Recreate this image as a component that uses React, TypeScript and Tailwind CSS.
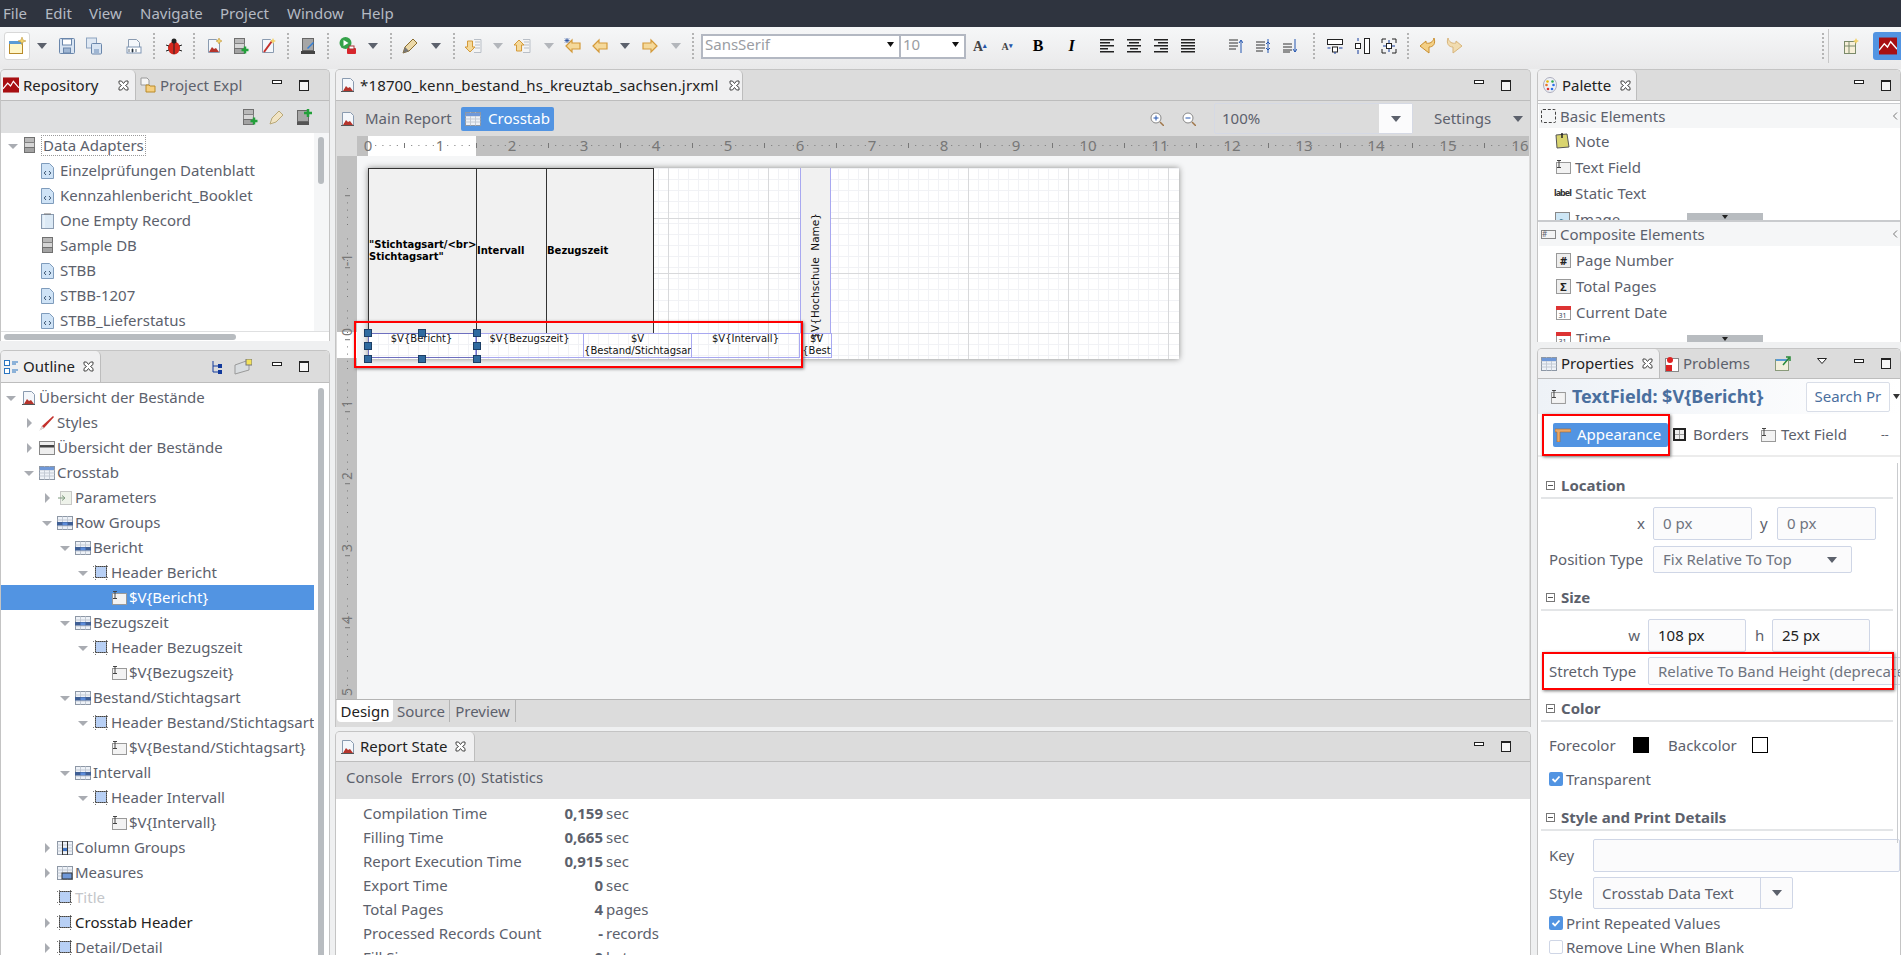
import React from 'react'

const Page = ({ children }: { children?: React.ReactNode }) => (
  <svg width="16" height="16" viewBox="0 0 16 16">
    <path d="M2.500 1.500h8l3 3v10h-11z" fill="#f4f7fb" stroke="#8a9bb0" />
    {children}
  </svg>
)

const ReportIcon = () => (
  <Page>
    <path d="M3 14l3-5 2 2 2-1 3 4z" fill="#b5342c" />
    <path d="M1 14.500h13" stroke="#555" />
  </Page>
)

const XmlIcon = () => (
  <svg width="13" height="16" viewBox="0 0 13 16">
    <path d="M.5 .5h8l4 4v11H.5z" fill="#cfe3f6" stroke="#7f9cbc" />
    <path d="M5 8l-1.800 2L5 12M8 8l1.800 2L8 12" stroke="#3b5470" fill="none" />
  </svg>
)

const EmptyRecord = () => (
  <svg width="13" height="16" viewBox="0 0 13 16">
    <rect x=".5" y="1.500" width="12" height="14" fill="#dbe9f5" stroke="#8a9bb0" />
    <path d="M3 .5h7v1H3z" fill="#777" />
    <path d="M3 2v13" stroke="#f4f9fd" />
  </svg>
)

const DbIcon = ({ plus }: { plus?: boolean }) => (
  <svg width="16" height="17" viewBox="0 0 16 17">
    <rect x="1.500" y=".5" width="10" height="5" fill="#b9b9b9" stroke="#707070" />
    <rect x="1.500" y="5.500" width="10" height="5" fill="#d6d6d6" stroke="#808080" />
    <rect x="1.500" y="10.500" width="10" height="5" fill="#a3a3a3" stroke="#707070" />
    {plus && <path d="M12 8.500v7M8.500 12h7" stroke="#22a03a" strokeWidth="2.500" />}
  </svg>
)

const RepoLogo = ({ big }: { big?: boolean }) => (
  <svg width={big ? 18 : 16} height={big ? 18 : 16} viewBox="0 0 17 16">
    <rect width="17" height="16" fill="#a80f12" />
    <path d="M0 12l5-6 3 3 3-5 6 7" fill="none" stroke="#fff" strokeWidth="1.300" />
  </svg>
)

const CloseX = () => (
  <svg width="11" height="11" viewBox="0 0 11 11">
    <path
      d="M1 1h2.500L5.500 3.500 7.500 1H10v2.500L7.500 5.500 10 7.500V10H7.500L5.500 7.500 3.500 10H1V7.500l2.500-2-2.500-2z"
      fill="#fff"
      stroke="#444"
    />
  </svg>
)

const MinMax = () => (
  <div className="flex items-center gap-[17px]">
    <span className="mb-[6px] h-[4px] w-[10px] border border-[#222] bg-white" />
    <span className="h-[11px] w-[10px] border border-t-[2px] border-[#222] bg-[#f6f6f6]" />
  </div>
)

const Caret = ({ light }: { light?: boolean }) => (
  <svg width="10" height="6" viewBox="0 0 10 6">
    <path d="M0 0h10L5 6z" fill={light ? '#b3b6bb' : '#5c616c'} />
  </svg>
)

const Tri = ({ open }: { open?: boolean }) => (
  <svg width="10" height="10" viewBox="0 0 10 10">
    {open ? <path d="M0 3h10L5 8z" fill="#a9acb2" /> : <path d="M3 0v10l5-5z" fill="#a9acb2" />}
  </svg>
)

const Sep = ({ className }: { className: string }) => (
  <div className={`flex h-[26px] shrink-0 justify-center ${className}`}>
    <span className="h-full border-l-2 border-dotted border-[#b4b4b4]" />
  </div>
)

const Slot = ({ className, children }: { className: string; children?: React.ReactNode }) => (
  <div className={`flex shrink-0 items-center justify-center ${className}`}>{children}</div>
)

const Arrow = ({ dir, star, doc }: { dir: 'l' | 'r' | 'u' | 'd'; star?: boolean; doc?: boolean }) => {
  const rot = { l: 0, r: 180, u: 90, d: 270 }[dir]
  return (
    <svg width="18" height="18" viewBox="0 0 18 18">
      {doc && <path d="M10 2.500h7v13h-7M11 5h5M11 8h5M11 11h5" fill="#f4f4f4" stroke="#b9bfc7" />}
      <g transform={`rotate(${rot} ${doc ? 6 : 9} 9)`}>
        {doc ? (
          <path d="M0 9l5-5v2.500h6v5H5V14z" fill="#f5d99a" stroke="#d49a3a" />
        ) : (
          <path d="M2 9l6-6v3h8v6H8v3z" fill="#f5d99a" stroke="#d49a3a" strokeWidth="1.200" />
        )}
      </g>
      {star && <path d="M3 1v5M.5 3.500h5M1 1.500l4 4M5 1.500l-4 4" stroke="#2a4f9c" strokeWidth=".8" />}
    </svg>
  )
}

const Undo = ({ flip }: { flip?: boolean }) => (
  <svg width="18" height="18" viewBox="0 0 18 18" className={flip ? '-scale-x-100 opacity-60' : ''}>
    <path
      d="M15 1c2 6-1 9-5 9v6L1 9l6-5v2c4 1 7-1 8-5z"
      fill="#f3cf85"
      stroke="#c98e2e"
      strokeLinejoin="round"
    />
  </svg>
)

const AlignIcon = ({ kind }: { kind: 'l' | 'c' | 'r' | 'j' }) => {
  const rows = [14, 10, 14, 8, 14]
  return (
    <svg width="14" height="14" viewBox="0 0 14 14">
      {rows.map((w, i) => {
        const len = kind === 'j' ? 14 : w
        const x = kind === 'l' || kind === 'j' ? 0 : kind === 'c' ? (14 - len) / 2 : 14 - len
        return <rect key={i} x={x} y={i * 3} width={len} height="1.500" fill="#222" />
      })}
    </svg>
  )
}

const TableIcon = ({ mark }: { mark: 'row' | 'col' | 'cell' | 'full' }) => (
  <svg width="16" height="14" viewBox="0 0 16 14">
    <rect x=".5" y=".5" width="15" height="13" fill="#eef2f8" stroke="#8d97a5" />
    <path d="M.5 4h15M.5 7h15M.5 10h15M5.500 .5v13M10.500 .5v13" stroke="#c3cad4" />
    {mark === 'row' && <rect x="0" y="6" width="16" height="3.500" fill="#3f5f95" />}
    {mark === 'row' && <rect x="5.500" y="6.500" width="5" height="2.500" fill="#5d8ddb" />}
    {mark === 'col' && <rect x="5.500" y="0" width="5" height="14" fill="none" stroke="#333" />}
    {mark === 'col' && <rect x="6" y="7" width="4" height="3" fill="#3f74c4" />}
    {mark === 'cell' && <rect x="5" y="7" width="10" height="6" fill="#6f98d8" stroke="#333" />}
    {mark === 'full' && <rect x="1" y="1" width="14" height="3" fill="#6f98d8" />}
  </svg>
)

const BandIcon = () => (
  <svg width="16" height="15" viewBox="0 0 16 15">
    <rect x="2.500" y="1.500" width="11" height="11" fill="#b8d0f5" stroke="#444" />
    <path d="M0 1.500h16M0 12.500h16M2.500 0v15M13.500 0v15" stroke="#777" strokeDasharray="1 1" />
  </svg>
)

const FieldIcon = () => (
  <svg width="16" height="16" viewBox="0 0 16 16">
    <rect x="1.500" y="3.500" width="14" height="11" fill="#f3f3f3" stroke="#999" />
    <path d="M2 1.500h4M4 1.500v7M2 8.500h4" stroke="#444" />
  </svg>
)

const tree1 = [
  { icon: <XmlIcon />, label: 'Einzelprüfungen Datenblatt' },
  { icon: <XmlIcon />, label: 'Kennzahlenbericht_Booklet' },
  { icon: <EmptyRecord />, label: 'One Empty Record' },
  { icon: <DbIcon />, label: 'Sample DB' },
  { icon: <XmlIcon />, label: 'STBB' },
  { icon: <XmlIcon />, label: 'STBB-1207' },
  { icon: <XmlIcon />, label: 'STBB_Lieferstatus' },
]

type Node = {
  indent: string
  tri?: 'open' | 'closed'
  icon: React.ReactNode
  label: string
  selected?: boolean
  tone?: string
}

const outline: Node[] = [
  { indent: 'pl-[3px]', tri: 'open', icon: <ReportIcon />, label: 'Übersicht der Bestände' },
  {
    indent: 'pl-[21px]',
    tri: 'closed',
    icon: (
      <svg width="16" height="16" viewBox="0 0 16 16">
        <path d="M1 15l2-4L14 1l1 1L5 13z" fill="#c4302b" />
        <path d="M0 16l3-5 2 2z" fill="#ddd" />
      </svg>
    ),
    label: 'Styles',
  },
  {
    indent: 'pl-[21px]',
    tri: 'closed',
    icon: (
      <svg width="16" height="14" viewBox="0 0 16 14">
        <rect x=".5" y=".5" width="15" height="13" fill="#eee" stroke="#888" />
        <rect x="1" y="4" width="14" height="2.500" fill="#444" />
      </svg>
    ),
    label: 'Übersicht der Bestände',
  },
  { indent: 'pl-[21px]', tri: 'open', icon: <TableIcon mark="full" />, label: 'Crosstab' },
  {
    indent: 'pl-[39px]',
    tri: 'closed',
    icon: (
      <svg width="16" height="16" viewBox="0 0 16 16">
        <rect x="3.500" y="1.500" width="11" height="13" fill="#eef2ea" stroke="#999" strokeDasharray="1 1" />
        <path d="M1 8h6M5 5.500L8 8l-3 2.500" fill="none" stroke="#7f9a7f" />
      </svg>
    ),
    label: 'Parameters',
  },
  { indent: 'pl-[39px]', tri: 'open', icon: <TableIcon mark="row" />, label: 'Row Groups' },
  { indent: 'pl-[57px]', tri: 'open', icon: <TableIcon mark="row" />, label: 'Bericht' },
  { indent: 'pl-[75px]', tri: 'open', icon: <BandIcon />, label: 'Header Bericht' },
  { indent: 'pl-[93px]', icon: <FieldIcon />, label: '$V{Bericht}', selected: true },
  { indent: 'pl-[57px]', tri: 'open', icon: <TableIcon mark="row" />, label: 'Bezugszeit' },
  { indent: 'pl-[75px]', tri: 'open', icon: <BandIcon />, label: 'Header Bezugszeit' },
  { indent: 'pl-[93px]', icon: <FieldIcon />, label: '$V{Bezugszeit}' },
  { indent: 'pl-[57px]', tri: 'open', icon: <TableIcon mark="row" />, label: 'Bestand/Stichtagsart' },
  { indent: 'pl-[75px]', tri: 'open', icon: <BandIcon />, label: 'Header Bestand/Stichtagsart' },
  { indent: 'pl-[93px]', icon: <FieldIcon />, label: '$V{Bestand/Stichtagsart}' },
  { indent: 'pl-[57px]', tri: 'open', icon: <TableIcon mark="row" />, label: 'Intervall' },
  { indent: 'pl-[75px]', tri: 'open', icon: <BandIcon />, label: 'Header Intervall' },
  { indent: 'pl-[93px]', icon: <FieldIcon />, label: '$V{Intervall}' },
  { indent: 'pl-[39px]', tri: 'closed', icon: <TableIcon mark="col" />, label: 'Column Groups' },
  { indent: 'pl-[39px]', tri: 'closed', icon: <TableIcon mark="cell" />, label: 'Measures' },
  { indent: 'pl-[39px]', icon: <BandIcon />, label: 'Title', tone: 'text-[#c4c6ca]' },
  { indent: 'pl-[39px]', tri: 'closed', icon: <BandIcon />, label: 'Crosstab Header', tone: 'text-[#222]' },
  { indent: 'pl-[39px]', tri: 'closed', icon: <BandIcon />, label: 'Detail/Detail' },
]

const stats = [
  ['Compilation Time', '0,159', 'sec'],
  ['Filling Time', '0,665', 'sec'],
  ['Report Execution Time', '0,915', 'sec'],
  ['Export Time', '0', 'sec'],
  ['Total Pages', '4', 'pages'],
  ['Processed Records Count', '-', 'records'],
  ['Fill Size', '0', 'bytes'],
]

const Calendar = () => (
  <svg width="15" height="16" viewBox="0 0 15 16">
    <rect x=".5" y="2.500" width="14" height="13" fill="#fff" stroke="#999" />
    <rect x="0" y="2" width="15" height="4" fill="#d33" />
    <text x="2.500" y="14" fontSize="7" fill="#345">31</text>
  </svg>
)

const BoxIcon = ({ ch }: { ch: string }) => (
  <span className="flex h-[15px] w-[15px] items-center justify-center border border-[#999] bg-[#eee] text-[11px] font-bold leading-none text-[#222]">
    {ch}
  </span>
)

const PaletteRow = ({ icon, label }: { icon: React.ReactNode; label: string }) => (
  <div className="flex h-[26px] shrink-0 items-center pl-[17px]">
    <span className="flex w-[20px] items-center">{icon}</span>
    <span>{label}</span>
  </div>
)

const PaletteHead = ({ icon, label }: { icon: React.ReactNode; label: string }) => (
  <div className="flex h-[24px] items-center bg-[#f5f6f7] pl-[2px]">
    <span className="flex w-[15px]">{icon}</span>
    <span className="ml-[4px]">{label}</span>
    <svg width="7" height="8" viewBox="0 0 7 8" className="ml-auto mr-0">
      <path d="M4 .5L.5 4 4 7.500" fill="none" stroke="#777" />
    </svg>
  </div>
)

const ScrollNub = () => (
  <div className="absolute bottom-0 left-[149px] flex h-[7px] w-[76px] items-center justify-center bg-[#b8bcc0]">
    <svg width="6" height="4" viewBox="0 0 6 4">
      <path d="M0 0h6L3 4z" fill="#222" />
    </svg>
  </div>
)

const SectionHead = ({ label, className }: { label: string; className: string }) => (
  <div className={`mr-[7px] flex h-[25px] items-center gap-[6px] border-b-2 border-[#e3e5e7] pl-[5px] ${className}`}>
    <span className="flex h-[9px] w-[9px] items-center justify-center border border-[#777]">
      <span className="h-px w-[5px] bg-[#555]" />
    </span>
    <span className="font-bold text-[#5c616c]">{label}</span>
  </div>
)

const Input = ({ className, value, dark }: { className: string; value?: string; dark?: boolean }) => (
  <div
    className={`flex shrink-0 items-center rounded-[2px] border border-[#cfd6e6] bg-[#fbfbfc] pl-[9px] ${
      dark ? 'text-[#222]' : 'text-[#6f747f]'
    } ${className}`}
  >
    {value}
  </div>
)

const Check = ({ on }: { on?: boolean }) =>
  on ? (
    <span className="flex h-[14px] w-[14px] items-center justify-center rounded-[2px] bg-[#5294e2]">
      <svg width="10" height="10" viewBox="0 0 10 10">
        <path d="M1.500 5l2.500 2.500L8.500 2.500" fill="none" stroke="#fff" strokeWidth="1.800" />
      </svg>
    </span>
  ) : (
    <span className="h-[14px] w-[14px] rounded-[2px] border border-[#cfd6e6] bg-white" />
  )

const RedBox = ({ className }: { className: string }) => (
  <div className={`pointer-events-none absolute border-[2px] border-[#f00] shadow-[1px_1px_3px_#777] ${className}`} />
)

const Handle = ({ className }: { className: string }) => (
  <span className={`absolute h-[8px] w-[8px] border border-[#1d3f66] bg-[#2f6a9f] ${className}`} />
)

const Ruler = () => (
  <svg width="1172" height="20" className="block">
    <rect width="1172" height="20" fill="#c0c0c0" />
    <rect x="11" width="108" height="20" fill="#fff" />
    {Array.from({ length: 160 }).map((_, i) =>
      i % 10 === 0 ? null : (
        <rect key={i} x={11 + i * 7.2} y={i % 5 === 0 ? 7 : 9} width="1" height={i % 5 === 0 ? 5 : 1} fill="#777" />
      ),
    )}
    {Array.from({ length: 17 }).map((_, i) => (
      <text key={i} x={11 + i * 72} y="15" textAnchor="middle" fontSize="15" fill="#777" fontFamily="Noto Sans">
        {i}
      </text>
    ))}
  </svg>
)

const VRuler = () => (
  <svg width="20" height="543" className="block">
    <rect width="20" height="543" fill="#c0c0c0" />
    <rect y="176" width="20" height="26" fill="#fff" />
    {Array.from({ length: 76 }).map((_, i) =>
      (i + 4) % 10 === 0 ? null : (
        <rect key={i} x={i % 5 === 1 ? 8 : 10} y={32 + i * 7.2} width={i % 5 === 1 ? 5 : 1} height="1" fill="#777" />
      ),
    )}
    {[-1, 0, 1, 2, 3, 4, 5].map(n => (
      <text
        key={n}
        transform={`translate(15 ${176 + n * 72}) rotate(-90)`}
        textAnchor="middle"
        fontSize="14"
        fill="#777"
        fontFamily="Noto Sans"
      >
        {n}
      </text>
    ))}
  </svg>
)

const GridLines = () => (
  <svg width="811" height="191" className="absolute left-0 top-0">
    <rect width="811" height="191" fill="#fff" />
    {Array.from({ length: 81 }).map((_, i) => (
      <path key={i} d={`M${i * 10 + 0.5} 0V191`} stroke="#f1f2f5" />
    ))}
    {Array.from({ length: 20 }).map((_, i) => (
      <path key={i} d={`M0 ${i * 11 + 0.5}H811`} stroke="#f1f2f5" />
    ))}
    {[300, 400, 500, 600, 700, 800].map(x => (
      <path key={x} d={`M${x + 0.5} 0V191`} stroke="#d8d9db" />
    ))}
    {[50, 105, 165].map(y => (
      <path key={y} d={`M0 ${y + 0.5}H811`} stroke="#d8d9db" />
    ))}
  </svg>
)

const HeadCell = ({ className, children }: { className: string; children: React.ReactNode }) => (
  <div className={`flex items-center border-l border-t border-[#333] bg-[#f1f1f1] pb-[1px] font-bold leading-[12px] text-black ${className}`}>
    <span>{children}</span>
  </div>
)

const DataCell = ({ children }: { children?: React.ReactNode }) => (
  <div className="h-[25px] w-[108px] shrink-0 overflow-hidden whitespace-nowrap border-y border-r border-[#a8a8f0] text-center leading-[12px] text-[#111]">
    <span className="relative -top-px block">{children}</span>
  </div>
)

function Canvas() {
  return (
    <div className="relative min-h-0 flex-1 bg-[#f5f6f7]">
      <div className="absolute left-[11px] top-[12px] h-[191px] w-[811px] font-['DejaVu_Sans',sans-serif] text-[10px] shadow-[0_0_6px_#8a8a8a]">
        <GridLines />
        <div className="relative flex h-[165px]">
          <HeadCell className="w-[108px]">
            "Stichtagsart/&lt;br&gt;
            <br />
            Stichtagsart"
          </HeadCell>
          <HeadCell className="w-[70px]">Intervall</HeadCell>
          <HeadCell className="w-[108px] border-r">Bezugszeit</HeadCell>
          <div className="w-[146px]" />
          <div className="flex w-[31px] items-start justify-center border-x border-[#a8a8f0] bg-[#f1f1f1] pt-[45px]">
            <span className="rotate-180 whitespace-pre text-[10.500px] text-[#111] [writing-mode:vertical-rl]">$V{'{'}Hochschule  Name{'}'}</span>
          </div>
        </div>
        <div className="relative flex h-[25px]">
          <div className="absolute inset-y-0 left-0 w-[109px] border border-[#6d6fbf]" />
          <DataCell>$V{'{'}Bericht{'}'}</DataCell>
          <DataCell>$V{'{'}Bezugszeit{'}'}</DataCell>
          <DataCell>
            $V
            <br />
            {'{'}Bestand/Stichtagsar
          </DataCell>
          <DataCell>$V{'{'}Intervall{'}'}</DataCell>
          <div className="ml-px h-[25px] w-[31px] overflow-hidden whitespace-nowrap border border-[#a8a8f0] text-center leading-[12px] text-[#111]">
            <span className="relative -top-px block">
              $V
              <br />
              {'{'}Best
            </span>
          </div>
        </div>
        <Handle className="left-[-4px] top-[161px]" />
        <Handle className="left-[50px] top-[161px]" />
        <Handle className="left-[105px] top-[161px]" />
        <Handle className="left-[-4px] top-[174px]" />
        <Handle className="left-[105px] top-[174px]" />
        <Handle className="left-[-4px] top-[187px]" />
        <Handle className="left-[50px] top-[187px]" />
        <Handle className="left-[105px] top-[187px]" />
      </div>
      <RedBox className="left-[-3px] top-[165px] h-[47px] w-[449px]" />
    </div>
  )
}

export default function App() {
  return (
    <div className="flex h-[955px] w-[1901px] flex-col overflow-hidden bg-[#eff0f1] font-['Noto_Sans',sans-serif] text-[15px] text-[#5c616c]">
      {/* menu */}
      <div className="flex h-[27px] shrink-0 items-center bg-[#2f343f] pl-[3px] text-[#b5bac3]">
        <span className="w-[42px]">File</span>
        <span className="w-[44px]">Edit</span>
        <span className="w-[51px]">View</span>
        <span className="w-[80px]">Navigate</span>
        <span className="w-[67px]">Project</span>
        <span className="w-[74px]">Window</span>
        <span>Help</span>
      </div>

      {/* toolbar */}
      <div className="flex h-[42px] shrink-0 items-center bg-gradient-to-b from-[#f6f7f8] to-[#e9e9ea] pb-[4px]">
        <Slot className="ml-[4px] h-[28px] w-[26px] rounded-[3px] border border-[#d8d8d8] bg-white">
          <svg width="18" height="18" viewBox="0 0 18 18">
            <rect x="1.500" y="4.500" width="13" height="12" fill="#fff6c8" stroke="#b88a2a" />
            <rect x="1" y="4" width="14" height="3" fill="#5b9bd5" />
            <path d="M14 0l1 3 3 1-3 1-1 3-1-3-3-1 3-1z" fill="#f3d36b" stroke="#b88a2a" strokeWidth=".5" />
          </svg>
        </Slot>
        <Slot className="w-[24px]"><Caret /></Slot>
        <Slot className="w-[26px]">
          <svg width="16" height="18" viewBox="0 0 16 18">
            <rect x=".5" y="1.500" width="15" height="15" rx="1" fill="#d8e4f2" stroke="#6a86ab" />
            <rect x="3.500" y="2" width="9" height="6" fill="#fff" stroke="#6a86ab" />
            <rect x="4.500" y="11" width="7" height="5" fill="#9fb6d3" stroke="#6a86ab" />
          </svg>
        </Slot>
        <Slot className="w-[27px]">
          <svg width="16" height="18" viewBox="0 0 16 18">
            <rect x=".5" y="1" width="10" height="10" fill="#dfe8f3" stroke="#8da3bf" />
            <rect x="5.500" y="6.500" width="10" height="10.500" rx="1" fill="#d8e4f2" stroke="#6a86ab" />
            <rect x="8" y="12" width="5" height="4" fill="#9fb6d3" />
          </svg>
        </Slot>
        <Slot className="w-[13px]" />
        <Slot className="w-[27px]">
          <Page>
            <rect x="1" y="9" width="14" height="6" fill="#fff" stroke="#7e95b4" />
            <path d="M3 11v3M6 11h1v3H6zM10 11v3" stroke="#345" strokeWidth=".8" />
          </Page>
        </Slot>
        <Sep className="w-[14px]" />
        <Slot className="w-[26px]">
          <svg width="18" height="18" viewBox="0 0 18 18">
            <ellipse cx="9" cy="11" rx="6" ry="6.500" fill="#d5281e" />
            <circle cx="9" cy="4" r="2.500" fill="#222" />
            <path d="M9 5v12M1 8l3 1M17 8l-3 1M1 14l3-1M17 14l-3-1" stroke="#222" />
          </svg>
        </Slot>
        <Sep className="w-[14px]" />
        <Slot className="w-[26px]">
          <Page>
            <path d="M3 14l3-5 2 2 2-1 3 4z" fill="#b5342c" />
            <path d="M13 0l1 2 2 1-2 1-1 2-1-2-2-1 2-1z" fill="#f3d36b" stroke="#b88a2a" strokeWidth=".5" />
          </Page>
        </Slot>
        <Slot className="w-[28px]"><DbIcon plus /></Slot>
        <Slot className="w-[26px]">
          <Page>
            <path d="M4 14L12 3" stroke="#c4302b" strokeWidth="2" />
            <path d="M13 0l1 2 2 1-2 1-1 2-1-2-2-1 2-1z" fill="#f3d36b" />
          </Page>
        </Slot>
        <Sep className="w-[14px]" />
        <Slot className="w-[26px]">
          <svg width="16" height="18" viewBox="0 0 16 18">
            <rect x="2.500" y="1.500" width="11" height="12" fill="#a6a6a6" stroke="#666" />
            <rect x="1" y="14" width="14" height="3" fill="#444" />
            <path d="M7 11l6-6 1 1-6 6z" fill="#2f7ed8" />
          </svg>
        </Slot>
        <Sep className="w-[14px]" />
        <Slot className="w-[26px]">
          <svg width="18" height="18" viewBox="0 0 18 18">
            <circle cx="6.500" cy="6" r="6" fill="#35a24a" />
            <path d="M4.500 3v6l5-3z" fill="#fff" />
            <rect x="8" y="11" width="9" height="6" rx="1" fill="#d7262c" />
            <rect x="10" y="9" width="5" height="3" fill="#fff" stroke="#a33" />
          </svg>
        </Slot>
        <Slot className="w-[24px]"><Caret /></Slot>
        <Sep className="w-[12px]" />
        <Slot className="w-[26px]">
          <svg width="18" height="18" viewBox="0 0 18 18">
            <path d="M2 16l2-6 8-8 4 4-8 8z" fill="#ecd9a8" stroke="#8a6d2f" />
            <path d="M2 16l2-6 4 4z" fill="#777" />
          </svg>
        </Slot>
        <Slot className="w-[26px]"><Caret /></Slot>
        <Sep className="w-[10px]" />
        <Slot className="w-[28px]"><Arrow dir="d" doc /></Slot>
        <Slot className="w-[22px]"><Caret light /></Slot>
        <Slot className="w-[26px]"><Arrow dir="u" doc /></Slot>
        <Slot className="w-[28px]"><Caret light /></Slot>
        <Slot className="w-[20px]"><Arrow dir="l" star /></Slot>
        <Slot className="w-[34px]"><Arrow dir="l" /></Slot>
        <Slot className="w-[16px]"><Caret /></Slot>
        <Slot className="w-[34px]"><Arrow dir="r" /></Slot>
        <Slot className="w-[18px]"><Caret light /></Slot>
        <Sep className="w-[16px]" />

        <div className="flex h-[25px] w-[200px] shrink-0 items-center justify-between border-2 border-[#b3b8c2] bg-white pb-[3px] pl-[2px] pr-[5px] text-[#9a9da3]">
          <span>SansSerif</span>
          <svg width="7" height="5" viewBox="0 0 7 5"><path d="M0 0h7L3.500 5z" fill="#111" /></svg>
        </div>
        <div className="flex h-[25px] w-[65px] shrink-0 items-center justify-between border-2 border-l-0 border-[#b3b8c2] bg-white pb-[3px] pl-[2px] pr-[5px] text-[#9a9da3]">
          <span>10</span>
          <svg width="7" height="5" viewBox="0 0 7 5"><path d="M0 0h7L3.500 5z" fill="#111" /></svg>
        </div>
        <Slot className="ml-[2px] w-[24px] font-['Liberation_Serif',serif] text-[14px] font-bold text-[#444]">A<span className="text-[7px] text-[#25a]">▴</span></Slot>
        <Slot className="w-[30px] font-['Liberation_Serif',serif] text-[10px] font-bold text-[#444]">A<span className="text-[7px] text-[#25a]">▾</span></Slot>
        <Slot className="w-[32px] font-['Liberation_Serif',serif] text-[16px] font-bold text-black">B</Slot>
        <Slot className="w-[35px] font-['Liberation_Serif',serif] text-[16px] font-bold italic text-black">I</Slot>
        <Slot className="ml-[4px] w-[27px]"><AlignIcon kind="l" /></Slot>
        <Slot className="w-[27px]"><AlignIcon kind="c" /></Slot>
        <Slot className="w-[27px]"><AlignIcon kind="r" /></Slot>
        <Slot className="w-[27px]"><AlignIcon kind="j" /></Slot>
        <Slot className="ml-[21px] w-[27px]">
          <svg width="14" height="14" viewBox="0 0 14 14"><path d="M0 1h9M0 4h9M0 7h9M0 10h7" stroke="#333" /><path d="M12 14V2M10 4l2-3 2 3" stroke="#2456b0" fill="none" /></svg>
        </Slot>
        <Slot className="w-[27px]">
          <svg width="14" height="14" viewBox="0 0 14 14"><path d="M0 3h9M0 6h9M0 9h9M0 12h7" stroke="#333" /><path d="M12 0v14M10 5l2-2 2 2M10 9l2 2 2-2" stroke="#2456b0" fill="none" /></svg>
        </Slot>
        <Slot className="w-[27px]">
          <svg width="14" height="14" viewBox="0 0 14 14"><path d="M0 5h9M0 8h9M0 11h9M0 13h7" stroke="#333" /><path d="M12 0v13M10 10l2 3 2-3" stroke="#2456b0" fill="none" /></svg>
        </Slot>
        <Sep className="ml-[4px] w-[14px]" />
        <Slot className="w-[27px]">
          <svg width="16" height="16" viewBox="0 0 16 16"><rect x=".5" y="1.500" width="15" height="5" fill="#fff" stroke="#222" /><path d="M.5 10h3M12 10h3.500" stroke="#123a9c" /><rect x="5.500" y="9" width="5" height="5" fill="#fff" stroke="#222" /><path d="M8 14v2" stroke="#123a9c" /></svg>
        </Slot>
        <Slot className="w-[27px]">
          <svg width="16" height="16" viewBox="0 0 16 16"><rect x="10.500" y=".5" width="5" height="15" fill="#fff" stroke="#222" /><path d="M4 0v3M4 12v4" stroke="#123a9c" /><rect x="1.500" y="5.500" width="5" height="5" fill="#fff" stroke="#222" /></svg>
        </Slot>
        <Slot className="w-[27px]">
          <svg width="16" height="16" viewBox="0 0 16 16"><path d="M5 1H1v4M11 1h4v4M5 15H1v-4M11 15h4v-4" fill="none" stroke="#222" /><rect x="5.500" y="5.500" width="5" height="5" fill="#fff" stroke="#222" /><path d="M8 2v3M8 11v3M2 8h3M11 8h3" stroke="#123a9c" /></svg>
        </Slot>
        <Sep className="w-[12px]" />
        <Slot className="w-[28px]"><Undo /></Slot>
        <Slot className="w-[24px]"><Undo flip /></Slot>
        <div className="flex-1" />
        <Sep className="w-[6px]" />
        <span className="ml-[2px] h-[34px] border-l border-[#c8c8c8]" />
        <Slot className="w-[44px]">
          <svg width="16" height="16" viewBox="0 0 16 16">
            <rect x="1.500" y="3.500" width="11" height="12" fill="#f6efd8" stroke="#7a8a6a" />
            <path d="M1.500 8h11M6 3.500v12" stroke="#7a8a6a" />
            <path d="M13 0l1 2 2 1-2 1-1 2-1-2-2-1 2-1z" fill="#f3d36b" />
          </svg>
        </Slot>
        <div className="flex h-[28px] w-[28px] items-center justify-center rounded-l-[3px] bg-[#5294e2] pl-[2px]">
          <RepoLogo big />
        </div>
      </div>

      <div className="flex min-h-0 flex-1">
        {/* left column */}
        <div className="flex w-[330px] shrink-0 flex-col gap-[9px]">
          <section className="flex h-[272px] flex-col overflow-hidden rounded-t-[5px] border-x border-t border-[#c4c4c4] bg-[#dfe0e1]">
            <div className="flex h-[31px] shrink-0 items-end border-b border-[#bdbdbd] bg-[#dcdcdc]">
              <div className="flex h-[30px] w-[135px] items-center rounded-tr-[5px] border-r border-[#bdbdbd] bg-[#f0f0f1] pl-[2px] text-[#222]">
                <RepoLogo />
                <span className="ml-[4px] w-[95px]">Repository</span>
                <CloseX />
              </div>
              <div className="flex h-[30px] items-center pl-[4px]">
                <svg width="16" height="16" viewBox="0 0 16 16">
                  <path d="M1 1h6l2 2v5H1z" fill="#f5f5f5" stroke="#999" />
                  <path d="M6 8h3l1 1h5v6H6z" fill="#f6cf7f" stroke="#b88a2a" />
                </svg>
                <span className="ml-[4px] w-[112px] whitespace-nowrap">Project Expl</span>
                <MinMax />
              </div>
            </div>
            <div className="flex h-[32px] shrink-0 items-center justify-end gap-[11px] pr-[17px]">
              <DbIcon plus />
              <svg width="16" height="16" viewBox="0 0 16 16">
                <path d="M1 15l2-6 7-7 4 4-7 7z" fill="#f1e4c4" stroke="#b9a878" />
              </svg>
              <svg width="16" height="17" viewBox="0 0 16 17">
                <rect x="1.500" y="1.500" width="11" height="11" fill="#a6a6a6" stroke="#666" />
                <rect x="1" y="13" width="12" height="3" fill="#555" />
                <path d="M12 0v8M8 4h8" stroke="#22a03a" strokeWidth="2.500" />
              </svg>
            </div>
            <div className="relative min-h-0 flex-1 bg-white pl-[6px]">
              <div className="flex h-[25px] items-center">
                <span className="flex w-[11px] justify-center"><Tri open /></span>
                <span className="ml-[4px] flex w-[18px] justify-center"><DbIcon /></span>
                <span className="ml-px border border-dotted border-[#999] px-px leading-[19px]">Data Adapters</span>
              </div>
              {tree1.map(r => (
                <div key={r.label} className="flex h-[25px] items-center pl-[34px]">
                  <span className="flex w-[19px]">{r.icon}</span>
                  <span>{r.label}</span>
                </div>
              ))}
              <div className="absolute inset-y-0 right-0 w-[15px] bg-[#f5f6f7]" />
              <div className="absolute right-[5px] top-[4px] h-[47px] w-[6px] rounded-[3px] bg-[#b8bcc0]" />
              <div className="absolute bottom-0 left-0 flex h-[10px] w-full items-center border-t border-[#dfe0e1] bg-white pl-[3px]">
                <div className="h-[6px] w-[232px] rounded-[3px] bg-[#b8bcc0]" />
              </div>
            </div>
          </section>

          <section className="flex min-h-0 flex-1 flex-col overflow-hidden rounded-t-[5px] border-x border-t border-[#c4c4c4] bg-white">
            <div className="flex h-[32px] shrink-0 items-end border-b border-[#bdbdbd] bg-[#dcdcdc]">
              <div className="flex h-[31px] w-[100px] items-center rounded-tr-[5px] border-r border-[#bdbdbd] bg-[#f0f0f1] pl-[3px] text-[#222]">
                <svg width="14" height="14" viewBox="0 0 14 14">
                  <rect x=".5" y=".5" width="5" height="5" fill="#fff" stroke="#2a74c0" />
                  <rect x=".5" y="8.500" width="5" height="5" fill="#fff" stroke="#2a74c0" />
                  <path d="M8 2h6M8 4h4M8 10h6M8 12h4" stroke="#2a74c0" />
                </svg>
                <span className="ml-[5px] w-[60px]">Outline</span>
                <CloseX />
              </div>
              <div className="flex h-[31px] flex-1 items-center pl-[110px]">
                <svg width="12" height="14" viewBox="0 0 12 14">
                  <path d="M2 1v11h5M2 6h5" fill="none" stroke="#123a9c" />
                  <rect x="7" y="4" width="4" height="4" fill="#123a9c" />
                  <rect x="7" y="10" width="4" height="4" fill="#123a9c" />
                </svg>
                <svg width="18" height="16" viewBox="0 0 18 16" className="ml-[11px]">
                  <path d="M1 6l14-5v10L1 15z" fill="#d9dde0" stroke="#999" />
                  <rect x="12" y="0" width="6" height="6" fill="#f3e25a" stroke="#777" />
                </svg>
                <span className="ml-[20px]"><MinMax /></span>
              </div>
            </div>
            <div className="relative min-h-0 flex-1 bg-white pt-[2px]">
              {outline.map((n, i) => (
                <div
                  key={i}
                  className={`ml-0 mr-[15px] flex h-[25px] items-center overflow-hidden whitespace-nowrap ${n.indent} ${
                    n.selected ? 'bg-[#5294e2] text-white' : n.tone ?? ''
                  }`}
                >
                  <span className="flex w-[14px] shrink-0 justify-center">{n.tri && <Tri open={n.tri === 'open'} />}</span>
                  <span className="flex w-[21px] shrink-0 justify-center">{n.icon}</span>
                  <span>{n.label}</span>
                </div>
              ))}
              <div className="absolute right-[5px] top-[5px] h-[600px] w-[6px] rounded-[3px] bg-[#b8bcc0]" />
            </div>
          </section>
        </div>

        {/* center column */}
        <div className="ml-[5px] flex w-[1196px] shrink-0 flex-col gap-[4px]">
          <section className="flex h-[658px] flex-col overflow-hidden rounded-t-[5px] border-x border-t border-[#c4c4c4] bg-[#dcdcdc]">
            <div className="flex h-[31px] shrink-0 items-end border-b border-[#bdbdbd] bg-[#dcdcdc]">
              <div className="flex h-[30px] w-[407px] items-center rounded-tr-[5px] border-r border-[#bdbdbd] bg-[#f0f0f1] pl-[4px] text-[#222]">
                <ReportIcon />
                <span className="ml-[4px] w-[369px] whitespace-nowrap tracking-[0.15px]">*18700_kenn_bestand_hs_kreuztab_sachsen.jrxml</span>
                <CloseX />
              </div>
              <div className="flex h-[30px] flex-1 items-center justify-end pr-[19px]"><MinMax /></div>
            </div>
            <div className="flex h-[35px] shrink-0 items-center pl-[4px]">
              <ReportIcon />
              <span className="ml-[9px] w-[96px] whitespace-nowrap">Main Report</span>
              <div className="flex h-[24px] w-[93px] items-center rounded-[2px] bg-[#5294e2] pl-[4px] text-white">
                <TableIcon mark="full" />
                <span className="ml-[7px]">Crosstab</span>
              </div>
              <span className="ml-[596px] flex w-[32px]">
                <svg width="14" height="14" viewBox="0 0 14 14"><circle cx="6" cy="6" r="5" fill="#fff" stroke="#888" /><path d="M3.500 6h5M6 3.500v5" stroke="#2456b0" /><path d="M10 10l4 4" stroke="#a0774a" strokeWidth="1.500" /></svg>
              </span>
              <span className="flex w-[32px]">
                <svg width="14" height="14" viewBox="0 0 14 14"><circle cx="6" cy="6" r="5" fill="#fff" stroke="#888" /><path d="M3.500 6h5" stroke="#2456b0" /><path d="M10 10l4 4" stroke="#a0774a" strokeWidth="1.500" /></svg>
              </span>
              <div className="flex h-[31px] w-[199px] items-center justify-between rounded-[2px] border border-[#d5d9e4] pl-[7px]">
                <span>100%</span>
                <span className="flex h-full w-[33px] items-center justify-center bg-[#fbfbfc]"><Caret /></span>
              </div>
              <span className="ml-[21px] w-[79px]">Settings</span>
              <Caret />
            </div>
            <div className="flex h-[20px] shrink-0 pl-[21px]"><Ruler /></div>
            <div className="flex min-h-0 flex-1 px-px">
              <VRuler />
              <Canvas />
            </div>
            <div className="flex h-[28px] shrink-0 border-t border-[#b4b4b4] pl-px">
              <span className="flex h-[22px] w-[56px] items-center justify-center rounded-b-[4px] bg-white text-[#222]">Design</span>
              <span className="flex h-[22px] w-[57px] items-center justify-center border-r border-[#b4b4b4]">Source</span>
              <span className="flex h-[22px] w-[66px] items-center justify-center border-r border-[#b4b4b4]">Preview</span>
            </div>
          </section>

          <section className="flex min-h-0 flex-1 flex-col overflow-hidden rounded-t-[5px] border-x border-t border-[#c4c4c4] bg-[#e0e0e1]">
            <div className="flex h-[30px] shrink-0 items-end border-b border-[#bdbdbd] bg-[#dcdcdc]">
              <div className="flex h-[29px] w-[139px] items-center rounded-tr-[5px] border-r border-[#bdbdbd] bg-[#f0f0f1] pl-[4px] text-[#222]">
                <ReportIcon />
                <span className="ml-[4px] w-[95px] whitespace-nowrap">Report State</span>
                <CloseX />
              </div>
              <div className="flex h-[29px] flex-1 items-center justify-end pr-[19px]"><MinMax /></div>
            </div>
            <div className="flex h-[37px] shrink-0 items-center pb-[6px] pl-[10px]">
              <span className="w-[65px]">Console</span>
              <span className="w-[70px] whitespace-nowrap">Errors (0)</span>
              <span>Statistics</span>
            </div>
            <div className="min-h-0 flex-1 bg-white pl-[27px] pt-[2px]">
              {stats.map(([label, value, unit]) => (
                <div key={label} className="flex h-[24px] items-center">
                  <span className="w-[200px]">{label}</span>
                  <span className="w-[40px] text-right font-bold">{value}</span>
                  <span className="ml-[3px]">{unit}</span>
                </div>
              ))}
            </div>
          </section>
        </div>

        {/* right column */}
        <div className="ml-[6px] flex min-w-0 flex-1 flex-col gap-[6px]">
          <section className="flex h-[273px] flex-col overflow-hidden rounded-t-[5px] border-x border-t border-[#c4c4c4] bg-white">
            <div className="flex h-[31px] shrink-0 items-end border-b border-[#bdbdbd] bg-[#dcdcdc]">
              <div className="flex h-[30px] w-[99px] items-center rounded-tr-[5px] border-r border-[#bdbdbd] bg-[#f0f0f1] pl-[5px] text-[#222]">
                <svg width="14" height="16" viewBox="0 0 14 16">
                  <ellipse cx="7" cy="8" rx="6.500" ry="7.500" fill="#eef2f6" stroke="#aab" />
                  <circle cx="4.500" cy="4.500" r="1.300" fill="#e6b800" />
                  <circle cx="9.500" cy="4.500" r="1.300" fill="#2ea84f" />
                  <circle cx="3.500" cy="8" r="1.300" fill="#e8762c" />
                  <circle cx="10.500" cy="8" r="1.300" fill="#2c6fe8" />
                  <circle cx="5" cy="12" r="1.300" fill="#d33" />
                  <circle cx="9" cy="12" r="1.300" fill="#2c6fe8" />
                </svg>
                <span className="ml-[5px] w-[58px]">Palette</span>
                <CloseX />
              </div>
              <div className="flex h-[30px] flex-1 items-center justify-end pr-[9px]"><MinMax /></div>
            </div>
            <div className="relative h-[121px] shrink-0 overflow-hidden border-b-2 border-[#c9cbce] pt-[2px]">
              <div className="border-t border-[#c9cbce] pl-px">
                <PaletteHead
                  label="Basic Elements"
                  icon={<span className="h-[14px] w-[15px] rounded-[2px] border border-dashed border-[#444]" />}
                />
              </div>
              <PaletteRow
                label="Note"
                icon={
                  <svg width="15" height="16" viewBox="0 0 15 16">
                    <path d="M1 2l11-1 2 13-12 1z" fill="#d9d46f" stroke="#555" />
                    <path d="M7 0v5" stroke="#222" strokeWidth="1.500" />
                  </svg>
                }
              />
              <PaletteRow label="Text Field" icon={<FieldIcon />} />
              <PaletteRow
                label="Static Text"
                icon={<span className="-ml-px text-[9px] font-bold tracking-[-1px] text-[#333]">label</span>}
              />
              <PaletteRow
                label="Image"
                icon={
                  <svg width="15" height="14" viewBox="0 0 15 14">
                    <rect x=".5" y=".5" width="14" height="13" fill="#cde6f5" stroke="#888" />
                    <path d="M1 10l5-3 8 3v3H1z" fill="#2f6f8f" />
                  </svg>
                }
              />
              <ScrollNub />
            </div>
            <div className="relative min-h-0 flex-1 overflow-hidden pl-px">
              <PaletteHead
                label="Composite Elements"
                icon={<span className="flex h-[9px] w-[15px] items-center border border-[#888] bg-[#f4f4f4] text-[8px] leading-none">#</span>}
              />
              <div className="mt-[1px]">
                <PaletteRow label="Page Number" icon={<BoxIcon ch="#" />} />
                <PaletteRow label="Total Pages" icon={<BoxIcon ch="Σ" />} />
                <PaletteRow label="Current Date" icon={<Calendar />} />
                <PaletteRow label="Time" icon={<Calendar />} />
              </div>
              <ScrollNub />
            </div>
          </section>

          <section className="relative flex min-h-0 flex-1 flex-col overflow-hidden rounded-t-[5px] border-x border-t border-[#c4c4c4] bg-white">
            <div className="flex h-[30px] shrink-0 items-end border-b border-[#bdbdbd] bg-[#dcdcdc]">
              <div className="flex h-[29px] w-[122px] items-center rounded-tr-[5px] border-r border-[#bdbdbd] bg-[#f0f0f1] pl-[3px] text-[#222]">
                <TableIcon mark="full" />
                <span className="ml-[4px] w-[81px]">Properties</span>
                <CloseX />
              </div>
              <div className="flex h-[29px] flex-1 items-center pl-[5px]">
                <svg width="14" height="16" viewBox="0 0 14 16">
                  <rect x=".5" y="2.500" width="13" height="13" fill="#fff" stroke="#888" />
                  <circle cx="5" cy="4" r="3" fill="#d22" />
                  <rect x="1" y="9" width="6" height="6" fill="#d22" />
                </svg>
                <span className="ml-[4px] w-[92px]">Problems</span>
                <svg width="16" height="15" viewBox="0 0 16 15">
                  <rect x=".5" y="3.500" width="13" height="11" fill="#f2efdc" stroke="#8a9a7a" />
                  <rect x="1" y="3" width="12" height="2" fill="#5b9bd5" />
                  <path d="M8 9l6-7M11 1h4v4" stroke="#2a8a3a" fill="none" strokeWidth="1.500" />
                </svg>
                <svg width="10" height="6" viewBox="0 0 10 6" className="mb-[6px] ml-[26px]">
                  <path d="M.5.5h9L5 5.500z" fill="#fff" stroke="#222" />
                </svg>
                <span className="ml-[27px]"><MinMax /></span>
              </div>
            </div>
            <div className="flex h-[35px] shrink-0 items-center bg-gradient-to-r from-[#eef2f7] to-white pl-[12px]">
              <FieldIcon />
              <span className="ml-[6px] w-[235px] whitespace-nowrap text-[18px] font-bold text-[#4a6f9e]">TextField: $V{'{'}Bericht{'}'}</span>
              <div className="flex h-[30px] w-[85px] items-center rounded-[2px] border border-[#d9dee8] bg-white pl-[8px] text-[#4a6f9e]">Search Pr</div>
              <svg width="7" height="5" viewBox="0 0 7 5" className="ml-[3px]"><path d="M0 0h7L3.500 5z" fill="#333" /></svg>
            </div>
            <div className="flex h-[43px] shrink-0 items-center border-b-2 border-[#ececec] pl-[15px]">
              <div className="flex h-[24px] w-[115px] items-center rounded-[2px] bg-[#5294e2] pl-[2px] text-white">
                <svg width="16" height="14" viewBox="0 0 16 14">
                  <path d="M0 1h16v3H5v10H2V4H0z" fill="#e9a868" stroke="#b06a2a" strokeWidth=".6" />
                </svg>
                <span className="ml-[6px]">Appearance</span>
              </div>
              <svg width="13" height="13" viewBox="0 0 13 13" className="ml-[5px]">
                <rect x="1" y="1" width="11" height="11" fill="#eee" stroke="#222" strokeWidth="2" />
                <path d="M6.500 2v9M2 6.500h9" stroke="#999" />
              </svg>
              <span className="ml-[7px] w-[67px]">Borders</span>
              <FieldIcon />
              <span className="ml-[5px] w-[100px]">Text Field</span>
              <span className="text-[12px]">--</span>
            </div>

            <div className="min-h-0 flex-1 overflow-hidden pl-[3px]">
              <SectionHead label="Location" className="mt-[17px]" />
              <div className="mt-[8px] flex h-[33px] items-center">
                <span className="w-[104px] text-right">x</span>
                <Input className="ml-[8px] h-[33px] w-[99px]" value="0 px" />
                <span className="ml-[8px] w-[17px]">y</span>
                <Input className="h-[33px] w-[99px]" value="0 px" />
              </div>
              <div className="mt-[6px] flex h-[27px] items-center">
                <span className="w-[112px] pl-[8px]">Position Type</span>
                <Input className="h-[27px] w-[199px] pr-[10px]" value="Fix Relative To Top" />
                <span className="-ml-[25px]"><Caret /></span>
              </div>
              <SectionHead label="Size" className="mt-[13px]" />
              <div className="mt-[8px] flex h-[33px] items-center">
                <span className="w-[99px] text-right">w</span>
                <Input className="ml-[8px] h-[33px] w-[98px]" value="108 px" dark />
                <span className="ml-[9px] w-[17px]">h</span>
                <Input className="h-[33px] w-[98px]" value="25 px" dark />
              </div>
              <div className="mt-[5px] flex h-[28px] items-center overflow-hidden">
                <span className="w-[107px] shrink-0 pl-[8px]">Stretch Type</span>
                <Input className="h-[28px] w-[260px] overflow-hidden whitespace-nowrap" value="Relative To Band Height (deprecated)" />
              </div>
              <SectionHead label="Color" className="mt-[12px]" />
              <div className="mt-[15px] flex h-[16px] items-center pl-[8px]">
                <span className="w-[84px]">Forecolor</span>
                <span className="h-[16px] w-[16px] bg-black" />
                <span className="ml-[19px] w-[84px]">Backcolor</span>
                <span className="h-[16px] w-[16px] border border-black bg-white" />
              </div>
              <div className="mt-[16px] flex h-[20px] items-center gap-[3px] pl-[8px]"><Check on />Transparent</div>
              <SectionHead label="Style and Print Details" className="mt-[17px]" />
              <div className="mt-[8px] flex h-[33px] items-center">
                <span className="w-[52px] shrink-0 pl-[8px]">Key</span>
                <Input className="h-[33px] flex-1" />
              </div>
              <div className="mt-[5px] flex h-[32px] items-center">
                <span className="w-[52px] shrink-0 pl-[8px]">Style</span>
                <div className="flex h-[32px] w-[200px] items-center rounded-[2px] border border-[#cfd6e6] bg-[#fbfbfc] pl-[8px]">
                  <span className="w-[158px] whitespace-nowrap">Crosstab Data Text</span>
                  <span className="flex h-full flex-1 items-center justify-center border-l border-[#cfd6e6]"><Caret /></span>
                </div>
              </div>
              <div className="mt-[2px] flex h-[24px] items-center gap-[3px] pl-[8px]"><Check on />Print Repeated Values</div>
              <div className="flex h-[24px] items-center gap-[3px] pl-[8px]"><Check />Remove Line When Blank</div>
            </div>
            <div className="absolute right-[2px] top-[114px] h-[380px] w-px bg-[#c9cbce]" />
            <RedBox className="left-[4px] top-[65px] h-[42px] w-[128px]" />
            <RedBox className="left-[4px] top-[303px] h-[38px] w-[352px]" />
          </section>
        </div>
      </div>
    </div>
  )
}
